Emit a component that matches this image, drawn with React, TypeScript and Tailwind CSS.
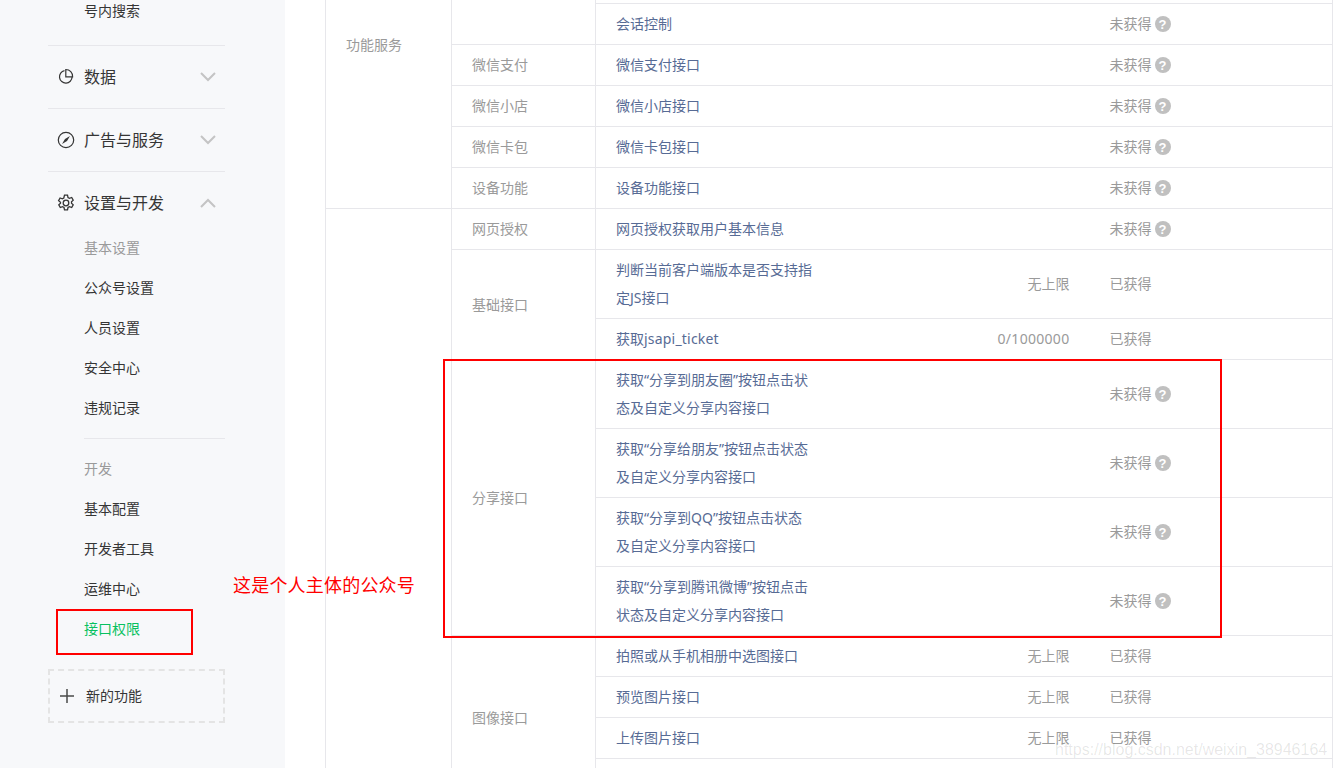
const sideFont = "font-['Noto_Sans','Noto_Sans_CJK_SC',sans-serif]";

function Chevron({ up }: { up?: boolean }) {
  return (
    <svg width="16" height="10" viewBox="0 0 16 10" fill="none" stroke="#c4c4c4" strokeWidth="2">
      <path d={up ? "M1 9l7-7 7 7" : "M1 1l7 7 7-7"} />
    </svg>
  );
}

function PieIcon() {
  return (
    <svg width="18" height="18" viewBox="0 0 18 18" fill="none" stroke="#353535" strokeWidth="1.2">
      <path d="M7.500 2.600a6.300 6.300 0 1 0 7.600 6.400" />
      <path d="M8.800 1.500a6.800 6.800 0 0 1 6.800 7.300H8.800z" />
    </svg>
  );
}

function CompassIcon() {
  return (
    <svg width="18" height="18" viewBox="0 0 18 18" fill="none" stroke="#353535" strokeWidth="1.2">
      <circle cx="9" cy="9" r="7.700" />
      <path d="M13 5L10 10 5 13 8 8z" fill="#353535" stroke="none" />
    </svg>
  );
}

function GearIcon() {
  return (
    <svg width="18" height="18" viewBox="0 0 18 18" fill="none" stroke="#353535" strokeWidth="1.3">
      <circle cx="9" cy="9" r="2.800" />
      <path d="M7.500 1.200h3l.5 2.300 1.500.8 2.200-.8 1.500 2.700-1.700 1.500v1.600l1.700 1.500-1.500 2.700-2.200-.8-1.500.8-.5 2.300h-3l-.5-2.300-1.500-.8-2.200.8-1.500-2.700 1.700-1.500V8.200L1.600 6.700l1.500-2.700 2.200.8 1.500-.8z" />
    </svg>
  );
}

function MenuHead({ icon, label, up }: { icon: React.ReactNode; label: string; up?: boolean }) {
  return (
    <div className="flex h-[63px] items-center border-t border-[#e7e7eb] pl-[9px] pr-[9px]">
      <span className="flex w-[27px] shrink-0">{icon}</span>
      <span className="flex-1 text-base text-[#353535]">{label}</span>
      <Chevron up={up} />
    </div>
  );
}

function SubItem({ label, tone = "text-[#353535]" }: { label: string; tone?: string }) {
  return <div className={`flex h-10 items-center pl-9 text-sm ${tone}`}>{label}</div>;
}

function Sidebar() {
  return (
    <aside className="flex h-full w-[285px] shrink-0 flex-col bg-[#f7f8fa] pl-12 pr-[60px]">
      <div className="flex h-[45px] shrink-0 items-start pl-9 text-sm leading-[22px] text-[#353535]">号内搜索</div>
      <MenuHead icon={<PieIcon />} label="数据" />
      <MenuHead icon={<CompassIcon />} label="广告与服务" />
      <MenuHead icon={<GearIcon />} label="设置与开发" up />
      <div className="-mt-[6px]">
        <SubItem label="基本设置" tone="text-[#9a9a9a]" />
        <SubItem label="公众号设置" />
        <SubItem label="人员设置" />
        <SubItem label="安全中心" />
        <SubItem label="违规记录" />
      </div>
      <div className="ml-9 mt-[10px] border-t border-[#e7e7eb]" />
      <div className="mt-[10px]">
        <SubItem label="开发" tone="text-[#9a9a9a]" />
        <SubItem label="基本配置" />
        <SubItem label="开发者工具" />
        <SubItem label="运维中心" />
        <SubItem label="接口权限" tone="text-[#07c160]" />
      </div>
      <div className="mt-5 flex h-[54px] items-center border-2 border-dashed border-[#e4e4e4] pl-[9px] text-sm text-[#353535]">
        <svg width="16" height="16" viewBox="0 0 16 16" stroke="#4a4a4a" strokeWidth="1.500">
          <path d="M8 1v14M1 8h14" />
        </svg>
        <span className="ml-[11px]">新的功能</span>
      </div>
    </aside>
  );
}

function Help() {
  return (
    <span className="ml-[3px] inline-flex h-4 w-4 items-center justify-center rounded-full bg-[#c0c0c0] font-['Liberation_Sans',sans-serif] text-[13px] font-bold leading-none text-white">
      ?
    </span>
  );
}

type Row = {
  group?: string;
  groupSpan?: number;
  cat?: string;
  catSpan?: number;
  name?: React.ReactNode;
  limit?: React.ReactNode;
  got?: boolean;
  tall?: boolean;
};

const cell = "border-t border-[#e7e7eb] align-middle";

const rows: Row[] = [
  { group: "功能服务", groupSpan: 8, cat: "", catSpan: 4, name: "" },
  { name: "" },
  { name: "" },
  { name: "会话控制" },
  { cat: "微信支付", name: "微信支付接口" },
  { cat: "微信小店", name: "微信小店接口" },
  { cat: "微信卡包", name: "微信卡包接口" },
  { cat: "设备功能", name: "设备功能接口" },
  { group: "", groupSpan: 18, cat: "网页授权", name: "网页授权获取用户基本信息" },
  { cat: "基础接口", catSpan: 2, name: <>判断当前客户端版本是否支持指<br />定JS接口</>, limit: "无上限", got: true, tall: true },
  {
    name: <>获取<span className="tracking-[0.2px]">jsapi_ticket</span></>,
    limit: <span className="tracking-[0.3px]">0/1000000</span>,
    got: true,
  },
  { cat: "分享接口", catSpan: 4, name: <>获取“分享到朋友圈”按钮点击状<br />态及自定义分享内容接口</>, tall: true },
  { name: <>获取“分享给朋友”按钮点击状态<br />及自定义分享内容接口</>, tall: true },
  { name: <>获取“分享到QQ”按钮点击状态<br />及自定义分享内容接口</>, tall: true },
  { name: <>获取“分享到腾讯微博”按钮点击<br />状态及自定义分享内容接口</>, tall: true },
  { cat: "图像接口", catSpan: 4, name: "拍照或从手机相册中选图接口", limit: "无上限", got: true },
  { name: "预览图片接口", limit: "无上限", got: true },
  { name: "上传图片接口", limit: "无上限", got: true },
  { name: "", limit: "", got: true },
];

function ApiTable() {
  return (
    <table className="-mt-[120px] w-[1008px] table-fixed border-collapse border-x border-[#e7e7eb] text-sm">
      <colgroup>
        <col className="w-[126px]" />
        <col className="w-[144px]" />
        <col className="w-[238px]" />
        <col className="w-[256px]" />
        <col />
      </colgroup>
      <tbody>
        {rows.map((r, i) => (
          <tr key={i} className={r.tall ? "h-[69px]" : "h-[41px]"}>
            {r.group !== undefined && (
              <td rowSpan={r.groupSpan} className={`${cell} border-r pl-5 text-[#9a9a9a]`}>
                {r.group}
              </td>
            )}
            {r.cat !== undefined && (
              <td rowSpan={r.catSpan} className={`${cell} border-r pl-5 text-[#9a9a9a]`}>
                {r.cat}
              </td>
            )}
            <td className={`${cell} pl-5 leading-7 text-[#576b95]`}>{r.name}</td>
            <td className={`${cell} pr-5 text-right text-[#9a9a9a]`}>{r.limit}</td>
            <td className={`${cell} pl-5 text-[#9a9a9a]`}>
              {r.name === "" ? "" : r.got ? "已获得" : <span className="inline-flex items-center">未获得<Help /></span>}
            </td>
          </tr>
        ))}
      </tbody>
    </table>
  );
}

export default function App() {
  return (
    <div className={`relative flex h-[768px] w-[1336px] overflow-hidden bg-white ${sideFont}`}>
      <Sidebar />
      <main className="ml-10 min-w-0 flex-1">
        <ApiTable />
      </main>
      {/* annotations on top of the screenshot */}
      <div className="absolute left-[443px] top-[359px] h-[279px] w-[779px] border-2 border-[#ff0000]" />
      <div className="absolute left-[56px] top-[609px] h-[46px] w-[137px] border-2 border-[#ff0000]" />
      <div className="absolute left-[233px] top-[572px] text-lg leading-[26px] tracking-[0.2px] text-[#ff0000]">这是个人主体的公众号</div>
      <div className="absolute left-[1055px] top-[740px] font-['Liberation_Sans',sans-serif] text-base leading-5 text-[#000000]/10">
        https://blog.csdn.net/weixin_38946164
      </div>
    </div>
  );
}
